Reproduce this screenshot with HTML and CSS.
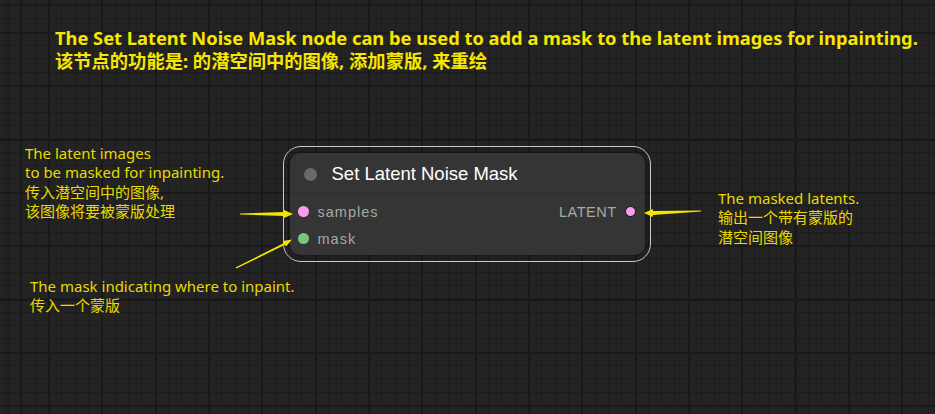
FILE: index.html
```html
<!DOCTYPE html>
<html>
<head>
<meta charset="utf-8">
<link rel="stylesheet" href="styles.css">
</head>
<body>
<div class="canvas">
  <div class="heading">
    <div class="h-en">The Set Latent Noise Mask node can be used to add a mask to the latent images for inpainting.</div>
    <div class="h-zh">该节点的功能是: 的潜空间中的图像, 添加蒙版, 来重绘</div>
  </div>

  <div class="note note-samples">
    <div>The latent images</div>
    <div>to be masked for inpainting.</div>
    <div>传入潜空间中的图像,</div>
    <div>该图像将要被蒙版处理</div>
  </div>

  <div class="note note-mask">
    <div>The mask indicating where to inpaint.</div>
    <div>传入一个蒙版</div>
  </div>

  <div class="note note-out">
    <div>The masked latents.</div>
    <div>输出一个带有蒙版的</div>
    <div>潜空间图像</div>
  </div>

  <div class="node-outline">
    <div class="node">
      <div class="node-title">
        <span class="title-dot"></span>
        <span class="title-text">Set Latent Noise Mask</span>
      </div>
      <div class="node-body">
        <div class="slot-row">
          <div class="slot"><span class="dot pink"></span><span class="slot-label">samples</span></div>
          <div class="slot out"><span class="slot-label">LATENT</span><span class="dot pink outlined"></span></div>
        </div>
        <div class="slot-row">
          <div class="slot"><span class="dot green"></span><span class="slot-label">mask</span></div>
        </div>
      </div>
    </div>
  </div>

  <svg class="arrows" width="935" height="414" viewBox="0 0 935 414">
    <g fill="#f2e600">
      <polygon points="240,213.5 284,212 284,210 293,214 284,218 284,216 240,214.5"/>
      <polygon points="235.5,267.5 284,243 283,241 292,239.5 286,246.5 285,244.8 236.5,268.5"/>
      <polygon points="701,210.5 653,211 653,209 644,213 653,217 653,215 701,211.5"/>
    </g>
  </svg>
</div>
</body>
</html>
```

FILE: styles.css
```css
html, body {
  margin: 0;
  padding: 0;
}
body {
  width: 935px;
  height: 414px;
  overflow: hidden;
  background: #222222;
}
.canvas {
  position: relative;
  width: 935px;
  height: 414px;
  background-color: #232323;
  background-image:
    repeating-linear-gradient(to right, #191919 0, #191919 2px, transparent 2px, transparent 53.33px),
    repeating-linear-gradient(to bottom, #191919 0, #191919 2px, transparent 2px, transparent 53.33px),
    repeating-linear-gradient(to right, #1c1c1c 0, #1c1c1c 1px, transparent 1px, transparent 13.33px),
    repeating-linear-gradient(to bottom, #1c1c1c 0, #1c1c1c 1px, transparent 1px, transparent 13.33px);
  background-position: 48px 32px, 48px 32px, 8px 5px, 8px 5px;
  font-family: "Noto Sans", "Noto Sans CJK SC", sans-serif;
}
.heading {
  position: absolute;
  left: 55px;
  top: 26px;
  color: #f7e600;
  font-weight: 700;
  font-size: 18.3px;
  line-height: 23px;
  white-space: nowrap;
}
.note {
  position: absolute;
  color: #e8da00;
  font-size: 15px;
  line-height: 19.4px;
  white-space: nowrap;
}
.note-samples {
  left: 25px;
  top: 144px;
}
.note-mask {
  left: 30px;
  top: 277px;
}
.note-out {
  left: 718px;
  top: 189px;
}
.node-outline {
  position: absolute;
  left: 283px;
  top: 146px;
  width: 366px;
  height: 114px;
  border: 1.5px solid #c8c8c8;
  border-radius: 18px;
  display: flex;
  align-items: center;
  justify-content: center;
}
.node {
  width: 355px;
  height: 102px;
  background: #353535;
  border-radius: 10px;
  box-shadow: 0 0 4px rgba(0,0,0,0.6);
  display: flex;
  flex-direction: column;
  font-family: "Liberation Sans", Arial, sans-serif;
}
.node-title {
  height: 41px;
  display: flex;
  align-items: center;
  border-bottom: 1px solid #2d2d2d;
  box-sizing: border-box;
  padding-left: 14px;
  padding-top: 2px;
  gap: 15px;
}
.title-dot {
  width: 13px;
  height: 13px;
  border-radius: 50%;
  background: #6a6a6a;
}
.title-text {
  color: #ffffff;
  font-size: 18.5px;
}
.node-body {
  display: flex;
  flex-direction: column;
  padding-top: 4px;
}
.slot-row {
  height: 27px;
  display: flex;
  align-items: center;
  justify-content: space-between;
  padding: 0 9px 0 8px;
}
.slot {
  display: flex;
  align-items: center;
  gap: 9px;
}
.slot.out {
  gap: 8px;
}
.slot-label {
  color: #a8a8a8;
  font-size: 14.5px;
  letter-spacing: 1px;
}
.slot.out .slot-label {
  letter-spacing: 0.5px;
}
.dot {
  width: 11px;
  height: 11px;
  border-radius: 50%;
  box-sizing: border-box;
}
.pink { background: #f99cf0; }
.green { background: #7cc47c; }
.outlined { border: 1.5px solid #111; }
.arrows {
  position: absolute;
  left: 0;
  top: 0;
  pointer-events: none;
}
```
